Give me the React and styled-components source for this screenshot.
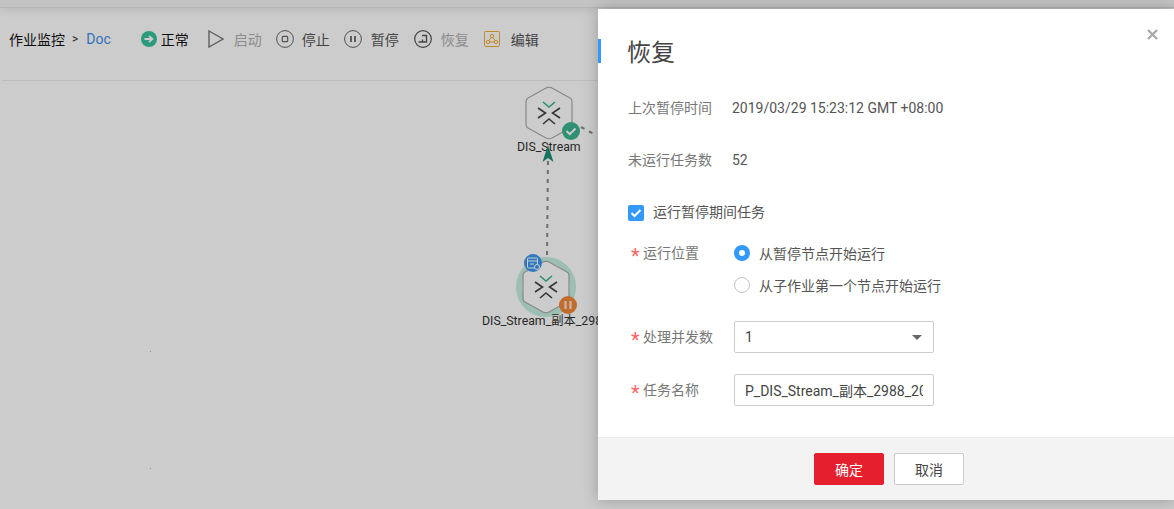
import React from "react";
import styled, { createGlobalStyle } from "styled-components";

const FONT = `Roboto, "Noto Sans CJK SC", sans-serif`;

const Global = createGlobalStyle`
  html, body {
    margin: 0;
    padding: 0;
    height: 100%;
    background: #fff;
    font-family: ${FONT};
    overflow: hidden;
  }
`;

const Page = styled.div`
  width: 1174px;
  height: 509px;
  display: flex;
  flex-direction: column;
  overflow: hidden;
  position: relative;
`;

const TopBand = styled.div`
  height: 7px;
  flex: none;
  background: #f6f6f6;
  border-bottom: 1px solid #e2e2e2;
  box-shadow: 0 2px 8px rgba(0, 0, 0, 0.1);
`;

const Toolbar = styled.div`
  height: 62px;
  flex: none;
  margin-left: 2px;
  padding: 0 0 10px 7px;
  border-bottom: 1px solid #ebebeb;
  display: flex;
  align-items: center;
  font-size: 14px;
  color: #333;
`;

const Crumb = styled.span`
  color: #111;
`;

const Sep = styled.span`
  margin: 0 8px 0 7px;
  font-size: 12px;
  color: #333;
`;

const Current = styled.span`
  color: #3f8ee8;
  margin-right: 30px;
`;

const Tool = styled.div`
  display: flex;
  align-items: center;
  gap: ${({ $gap }) => $gap || 9}px;
  margin-right: ${({ $after }) => $after || 15}px;
  color: ${({ $off, $dark }) => ($off ? "#b0b0b0" : $dark ? "#111" : "#555")};
  white-space: nowrap;
`;

const Canvas = styled.div`
  flex: 1;
  position: relative;
`;

const Edges = styled.svg`
  position: absolute;
  left: 0;
  top: 0;
`;

const Node = styled.div`
  position: absolute;
  left: ${({ $x }) => $x}px;
  top: ${({ $y }) => $y}px;
  width: 0;
  height: 0;
`;

const NodeArt = styled.svg`
  position: absolute;
  left: -34px;
  top: -34px;
`;

const NodeLabel = styled.div`
  position: absolute;
  top: ${({ $top }) => $top}px;
  left: ${({ $left }) => $left}px;
  font-size: 12.3px;
  line-height: 16px;
  color: #333;
  white-space: nowrap;
`;

const Dim = styled.div`
  position: absolute;
  inset: 0;
  background: rgba(0, 0, 0, 0.2);
`;

const Modal = styled.div`
  position: absolute;
  left: 598px;
  top: 9px;
  width: 576px;
  height: 491px;
  background: #fff;
  box-shadow: 0 0 14px rgba(0, 0, 0, 0.25);
  display: flex;
  flex-direction: column;
`;

const Close = styled.div`
  position: absolute;
  right: 15px;
  top: 17px;
  width: 13px;
  height: 13px;
`;

const Title = styled.h2`
  margin: 30px 0 0;
  height: 24px;
  padding-left: 27px;
  border-left: 3px solid #3399ff;
  font-size: 24px;
  font-weight: 400;
  line-height: 28px;
  color: #444;
  text-indent: -1px;
`;

const Body = styled.div`
  flex: 1;
  padding: 35px 0 0 30px;
  font-size: 14px;
  color: #555;
`;

const InfoRow = styled.div`
  display: flex;
  height: 20px;
  line-height: 20px;
  margin-bottom: 32px;
`;

const InfoLabel = styled.div`
  width: 104px;
  color: #777;
`;

const CheckRow = styled.label`
  display: flex;
  align-items: center;
  gap: 9px;
  height: 20px;
  margin: -1px 0 22px;
  color: #555;
`;

const CheckBox = styled.span`
  width: 16px;
  height: 16px;
  border-radius: 2px;
  background: #3399ff;
  display: flex;
  align-items: center;
  justify-content: center;
  margin-top: 3px;
`;

const FormRow = styled.div`
  display: flex;
  align-items: ${({ $top }) => ($top ? "flex-start" : "center")};
  margin-bottom: ${({ $mb }) => $mb}px;
`;

const FieldLabel = styled.div`
  width: 106px;
  height: 20px;
  line-height: 20px;
  flex: none;
  color: #777;
  white-space: nowrap;
  &::before {
    content: "*";
    display: inline-block;
    width: 15px;
    padding-left: 3px;
    box-sizing: border-box;
    color: #f66;
    font-size: 20px;
    line-height: 20px;
    vertical-align: -5px;
  }
`;

const RadioGroup = styled.div`
  display: flex;
  flex-direction: column;
  gap: 12px;
`;

const RadioRow = styled.div`
  display: flex;
  align-items: center;
  gap: 9px;
  height: 20px;
  color: #555;
`;

const Radio = styled.span`
  box-sizing: border-box;
  width: 16px;
  height: 16px;
  border-radius: 50%;
  border: ${({ $on }) => ($on ? "5px solid #3399ff" : "1px solid #c4c4c4")};
  background: #fff;
`;

const Select = styled.div`
  box-sizing: border-box;
  width: 200px;
  height: 32px;
  border: 1px solid #ccc;
  border-radius: 2px;
  display: flex;
  align-items: center;
  justify-content: space-between;
  padding: 0 11px 0 10px;
  color: #444;
`;

const Caret = styled.span`
  width: 0;
  height: 0;
  border-left: 5px solid transparent;
  border-right: 5px solid transparent;
  border-top: 5px solid #666;
`;

const TextInput = styled.input`
  box-sizing: border-box;
  width: 200px;
  height: 32px;
  border: 1px solid #ccc;
  border-radius: 2px;
  padding: 0 10px;
  font: 14px ${FONT};
  color: #444;
  outline: none;
`;

const Footer = styled.div`
  height: 62px;
  flex: none;
  padding-left: 6px;
  background: #f3f3f3;
  border-top: 1px solid #ececec;
  display: flex;
  align-items: center;
  justify-content: center;
  gap: 10px;
`;

const Button = styled.button`
  box-sizing: border-box;
  width: 70px;
  height: 32px;
  border-radius: 2px;
  font: 14px ${FONT};
  border: 1px solid ${({ $primary }) => ($primary ? "#e61f2e" : "#ccc")};
  background: ${({ $primary }) => ($primary ? "#e61f2e" : "#fff")};
  color: ${({ $primary }) => ($primary ? "#fff" : "#444")};
`;

function NodeGlyph({ cx, cy }) {
  return (
    <g fill="none" strokeWidth="1.6">
      <path d={`M${cx - 6} ${cy - 11} L${cx} ${cy - 6} L${cx + 6} ${cy - 11}`} stroke="#35b28f" />
      <path d={`M${cx - 11} ${cy - 5} L${cx - 3.5} ${cy} L${cx - 11} ${cy + 5}`} stroke="#444" />
      <path d={`M${cx + 11} ${cy - 5} L${cx + 3.5} ${cy} L${cx + 11} ${cy + 5}`} stroke="#444" />
      <path d={`M${cx - 6} ${cy + 11} L${cx} ${cy + 6} L${cx + 6} ${cy + 11}`} stroke="#444" />
    </g>
  );
}

const HEX = "M34 8.5 Q35.5 8 37 9 L55 19 Q57 20 57 22.5 L57 45.5 Q57 48 55 49 L37 59 Q34 60.5 31 59 L13 49 Q11 48 11 45.5 L11 22.5 Q11 20 13 19 L31 9 Q32.5 8 34 8.5 Z";

export default function App() {
  return (
    <Page>
      <Global />
      <TopBand />
      <Toolbar>
        <Crumb>作业监控</Crumb>
        <Sep>&gt;</Sep>
        <Current>Doc</Current>
        <Tool $gap={4} $after={19} $dark>
          <svg width="16" height="16" viewBox="0 0 16 16">
            <circle cx="8" cy="8" r="8" fill="#35c29b" />
            <path d="M3.5 8H11M8 4.8L11.4 8 8 11.2" fill="none" stroke="#fff" strokeWidth="1.8" />
          </svg>
          正常
        </Tool>
        <Tool $off $gap={10} $after={14}>
          <svg width="16" height="18" viewBox="0 0 16 18">
            <path d="M1 1L15 9 1 17Z" fill="none" stroke="#777" strokeWidth="1.4" />
          </svg>
          启动
        </Tool>
        <Tool $gap={8} $after={14}>
          <svg width="18" height="18" viewBox="0 0 18 18" fill="none" stroke="#666">
            <circle cx="9" cy="9" r="8.4" />
            <rect x="6.3" y="6.3" width="5.4" height="5.4" rx="1" strokeWidth="1.2" />
          </svg>
          停止
        </Tool>
        <Tool>
          <svg width="18" height="18" viewBox="0 0 18 18" fill="none" stroke="#666">
            <circle cx="9" cy="9" r="8.4" />
            <path d="M7 6V12M11 6V12" strokeWidth="1.8" />
          </svg>
          暂停
        </Tool>
        <Tool $off>
          <svg width="18" height="18" viewBox="0 0 18 18" fill="none" stroke="#555">
            <circle cx="9" cy="9" r="8.3" strokeWidth="1.2" />
            <path d="M8 5.5H12.5V12H4.5M8.5 9.5V12" strokeWidth="1.4" />
          </svg>
          恢复
        </Tool>
        <Tool $gap={11} $after={0}>
          <svg width="16" height="16" viewBox="0 0 16 16" fill="none" stroke="#f2ad2e">
            <rect x="0.5" y="0.5" width="15" height="15" rx="1" />
            <circle cx="8" cy="5" r="1.7" />
            <circle cx="4" cy="11" r="1.7" />
            <circle cx="12" cy="11" r="1.7" />
            <path d="M7.2 6.4L4.8 9.6M8.8 6.4L11.2 9.6M5.6 11H10.4" />
          </svg>
          编辑
        </Tool>
      </Toolbar>
      <Canvas>
        <Node $x={549} $y={32}>
          <NodeArt width="68" height="68" viewBox="0 0 68 68">
            <path d={HEX} fill="#fff" stroke="#aaa" strokeWidth="1.2" />
            <NodeGlyph cx={34} cy={34} />
            <circle cx="56" cy="52" r="9" fill="#3db592" />
            <path d="M51.5 52L54.8 55.2 60.5 49.5" fill="none" stroke="#fff" strokeWidth="2" />
          </NodeArt>
          <NodeLabel $top={26} $left={-32}>DIS_Stream</NodeLabel>
        </Node>
        <Node $x={546} $y={206}>
          <NodeArt width="68" height="68" viewBox="0 0 68 68">
            <circle cx="34" cy="34" r="27" fill="#fff" stroke="#c2f0e0" strokeWidth="6" />
            <path d={HEX} fill="#fff" stroke="#aaa" strokeWidth="1.2" />
            <NodeGlyph cx={34} cy={34} />
            <circle cx="21" cy="10" r="9" fill="#3a97f0" />
            <g fill="none" stroke="#fff" strokeWidth="1">
              <rect x="15.5" y="5" width="10" height="10" rx="1" />
              <path d="M15.5 8H25.5M18 11H22" />
              <circle cx="25" cy="14" r="2.5" fill="#3a97f0" />
            </g>
            <circle cx="56" cy="52" r="9" fill="#f0883a" />
            <path d="M53.5 48V56M58.5 48V56" stroke="#ffdcc0" strokeWidth="2.4" />
          </NodeArt>
          <NodeLabel $top={26} $left={-64}>DIS_Stream_副本_2988</NodeLabel>
        </Node>
        <Edges width="1174" height="428" viewBox="0 81 1174 428">
          <path d="M547 255L548 158" stroke="#8a8a8a" strokeWidth="2" strokeDasharray="4 5" fill="none" />
          <path d="M581 127L594 134" stroke="#8a8a8a" strokeWidth="2" strokeDasharray="4 5" fill="none" />
          <path d="M548 145L553.500 162 548 158 542.500 162Z" fill="#1d8f78" />
          <rect x="150" y="351" width="1" height="1" fill="#bbb" />
          <rect x="150" y="468" width="1" height="1" fill="#bbb" />
        </Edges>
      </Canvas>
      <Dim />
      <Modal>
        <Close>
          <svg width="13" height="13" viewBox="0 0 13 13">
            <path d="M2 2L11 11M11 2L2 11" stroke="#aaa" strokeWidth="2.4" />
          </svg>
        </Close>
        <Title>恢复</Title>
        <Body>
          <InfoRow>
            <InfoLabel>上次暂停时间</InfoLabel>
            <span>2019/03/29 15:23:12 GMT +08:00</span>
          </InfoRow>
          <InfoRow>
            <InfoLabel>未运行任务数</InfoLabel>
            <span>52</span>
          </InfoRow>
          <CheckRow>
            <CheckBox>
              <svg width="12" height="10" viewBox="0 0 12 10">
                <path d="M1.500 5L4.500 8 10.500 2" fill="none" stroke="#fff" strokeWidth="2" />
              </svg>
            </CheckBox>
            运行暂停期间任务
          </CheckRow>
          <FormRow $top $mb={26}>
            <FieldLabel>运行位置</FieldLabel>
            <RadioGroup>
              <RadioRow>
                <Radio $on />
                从暂停节点开始运行
              </RadioRow>
              <RadioRow>
                <Radio />
                从子作业第一个节点开始运行
              </RadioRow>
            </RadioGroup>
          </FormRow>
          <FormRow $mb={21}>
            <FieldLabel>处理并发数</FieldLabel>
            <Select>
              1
              <Caret />
            </Select>
          </FormRow>
          <FormRow $mb={0}>
            <FieldLabel>任务名称</FieldLabel>
            <TextInput readOnly value="P_DIS_Stream_副本_2988_20190329" />
          </FormRow>
        </Body>
        <Footer>
          <Button $primary>确定</Button>
          <Button>取消</Button>
        </Footer>
      </Modal>
    </Page>
  );
}
